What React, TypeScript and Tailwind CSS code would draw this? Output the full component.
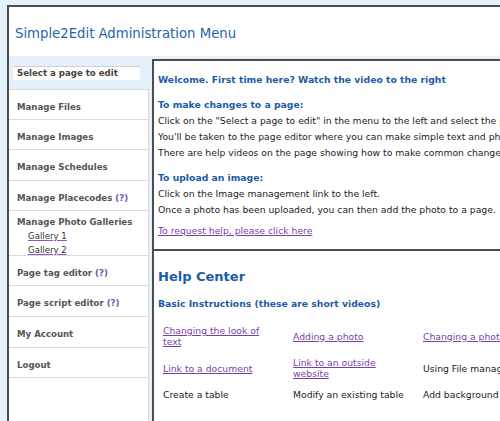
import React from 'react';

const blue = 'text-[#1a5ca6]';

interface NavItem {
  label: string;
  help?: boolean;
  h: string;
}

const navTop: NavItem[] = [
  { label: 'Manage Files', h: 'h-[30px]' },
  { label: 'Manage Images', h: 'h-[30px]' },
  { label: 'Manage Schedules', h: 'h-[31px]' },
  { label: 'Manage Placecodes', help: true, h: 'h-[30px]' },
];

const navBottom: NavItem[] = [
  { label: 'Page tag editor', help: true, h: 'h-[30px]' },
  { label: 'Page script editor', help: true, h: 'h-[31px]' },
  { label: 'My Account', h: 'h-[31px]' },
  { label: 'Logout', h: 'h-[30px]' },
];

const videos: { label: string; link: boolean }[][] = [
  [
    { label: 'Changing the look of text', link: true },
    { label: 'Adding a photo', link: true },
    { label: 'Changing a photo', link: true },
  ],
  [
    { label: 'Link to a document', link: true },
    { label: 'Link to an outside website', link: true },
    { label: 'Using File management', link: false },
  ],
  [
    { label: 'Create a table', link: false },
    { label: 'Modify an existing table', link: false },
    { label: 'Add background colour', link: false },
  ],
];

const NavRow = ({ item }: { item: NavItem }) => (
  <li className={`${item.h} flex items-center pl-[8px] pt-[5px] border-b border-[#dcdcdc] font-bold text-[#555]`}>
    {item.label}
    {item.help && <span className="ml-[3px] text-[#7a4fb3]">(?)</span>}
  </li>
);

export default function App() {
  return (
    <div className="h-[421px] w-[500px] overflow-hidden bg-[#e4f0fb] pl-[7px] pt-[5px] font-['DejaVu_Sans',Verdana,sans-serif]">
      <div className="w-[720px] bg-white border-l-2 border-t-2 border-[#4d4d4d]">
        {/* Header */}
        <div className="h-[49px] flex items-center pl-[6px] pt-[4px]">
          <h1 className="text-[13.25px] text-[#1f63ab]">Simple2Edit Administration Menu</h1>
        </div>

        <div className="flex bg-[#e4f0fb] h-[400px]">
          {/* Sidebar */}
          <aside className="w-[140px] flex flex-col text-[8.6px]">
            <div className="h-[34px] flex items-center pl-[4px] pr-[9px] border-b border-[#dcdcdc]">
              <div className="w-full h-[14px] bg-white border-t border-[#cfcfcf] flex items-center pl-[4px] font-bold text-[#444]">
                Select a page to edit
              </div>
            </div>
            <ul className="flex-1 bg-white border-r border-[#dcdcdc]">
              {navTop.map((item) => (
                <NavRow key={item.label} item={item} />
              ))}
              <li className="h-[45px] pl-[8px] pt-[4px] border-b border-[#dcdcdc] leading-[14px]">
                <div className="font-bold text-[#555]">Manage Photo Galleries</div>
                <div className="pl-[11px] text-[#333]">
                  <div><span className="underline decoration-[#8a5cc0]">Gallery 1</span></div>
                  <div><span className="underline decoration-[#8a5cc0]">Gallery 2</span></div>
                </div>
              </li>
              {navBottom.map((item) => (
                <NavRow key={item.label} item={item} />
              ))}
            </ul>
          </aside>

          {/* Main */}
          <main className="flex-1 ml-[3px] mt-[3px] text-[9.25px] text-[#222]">
            <section className="bg-white border-l-2 border-t-2 border-[#4d4d4d] pl-[4px] pt-[11px] pb-[10px] leading-[16px] whitespace-nowrap">
              <p className={`font-bold ${blue}`}>Welcome. First time here? Watch the video to the right</p>
              <p className={`mt-[9px] font-bold ${blue}`}>To make changes to a page:</p>
              <p>Click on the "Select a page to edit" in the menu to the left and select the page you want to change.</p>
              <p>You'll be taken to the page editor where you can make simple text and photo changes.</p>
              <p>There are help videos on the page showing how to make common changes.</p>
              <p className={`mt-[9px] font-bold ${blue}`}>To upload an image:</p>
              <p>Click on the Image management link to the left.</p>
              <p>Once a photo has been uploaded, you can then add the photo to a page.</p>
              <p className="mt-[5px]">
                <a className="text-[#7a3fa6] underline">To request help, please click here</a>
              </p>
            </section>

            <section className="bg-white border-l-2 border-t-2 border-[#4d4d4d] pl-[4px] pt-[17px] h-[200px]">
              <h2 className={`text-[13px] leading-[18px] font-bold ${blue}`}>Help Center</h2>
              <p className={`mt-[10px] leading-[16px] font-bold ${blue}`}>Basic Instructions (these are short videos)</p>
              <div className="mt-[8px] flex flex-col">
                {videos.map((row, i) => (
                  <div key={i} className="flex">
                    {row.map((cell) => (
                      <div key={cell.label} className="w-[130px] shrink-0 px-[5px] py-[5px] flex items-center leading-[11px]">
                        {cell.link ? (
                          <a className="max-w-[110px] text-[#7a3fa6] underline">{cell.label}</a>
                        ) : (
                          <span className="whitespace-nowrap">{cell.label}</span>
                        )}
                      </div>
                    ))}
                  </div>
                ))}
              </div>
            </section>
          </main>
        </div>
      </div>
    </div>
  );
}
